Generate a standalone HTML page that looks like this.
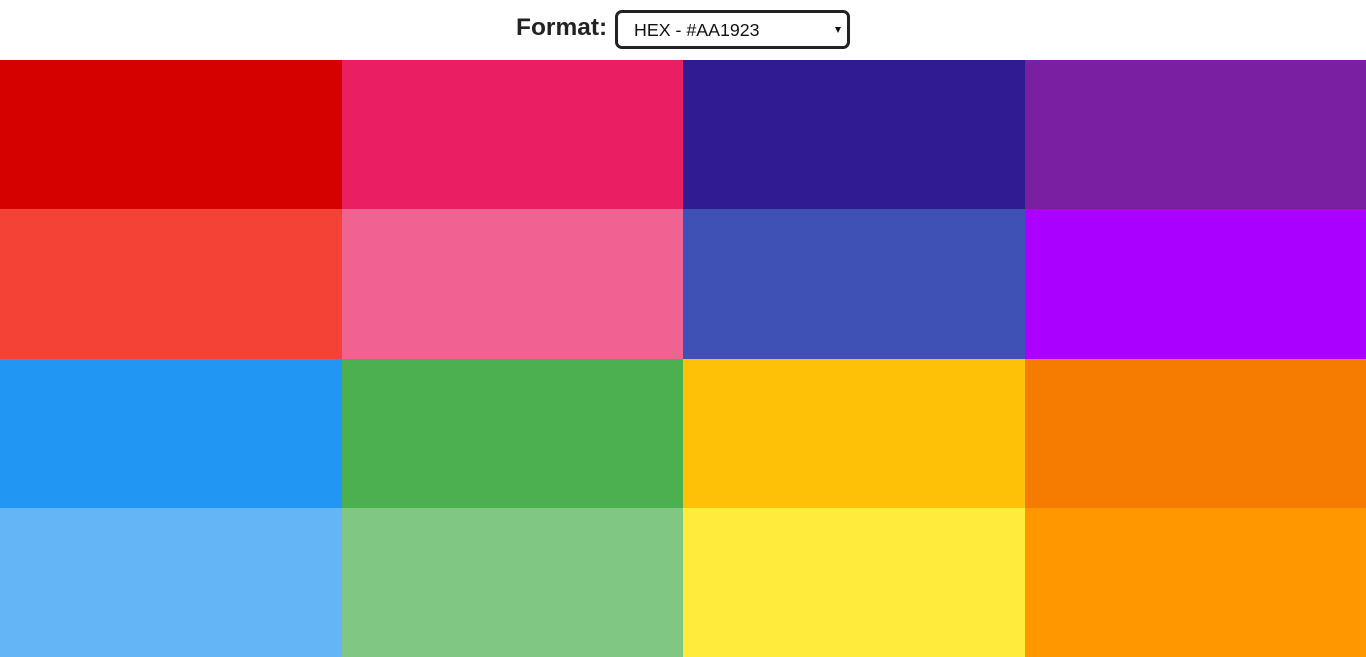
<!DOCTYPE html>
<html><head><style>
body{margin:0;width:1366px;height:657px;overflow:hidden;background:#fff;font-family:"Liberation Sans",sans-serif}
.hdr{position:absolute;left:0;top:0;width:1366px;height:60px}
.lbl{position:absolute;left:516px;top:14px;font-size:24.5px;font-weight:bold;color:#222}
.sel{position:absolute;left:615px;top:10px;border:3px solid #222;border-radius:7px;width:229px;height:33px}
.sel span{position:absolute;left:16px;top:7px;font-size:17.8px;color:#111}
.sel i{position:absolute;right:6px;top:14px;width:0;height:0;border-left:3px solid transparent;border-right:3px solid transparent;border-top:6px solid #111}
.c{position:absolute}
</style></head><body>
<div class="hdr"><div class="lbl">Format:</div><div class="sel"><span>HEX - #AA1923</span><i></i></div></div>
<div class="c" style="left:0;top:60px;width:342px;height:149px;background:#d50000"></div>
<div class="c" style="left:342px;top:60px;width:341px;height:149px;background:#e91e63"></div>
<div class="c" style="left:683px;top:60px;width:342px;height:149px;background:#311b92"></div>
<div class="c" style="left:1025px;top:60px;width:341px;height:149px;background:#7b1fa2"></div>
<div class="c" style="left:0;top:209px;width:342px;height:150px;background:#f44336"></div>
<div class="c" style="left:342px;top:209px;width:341px;height:150px;background:#f06292"></div>
<div class="c" style="left:683px;top:209px;width:342px;height:150px;background:#3f51b5"></div>
<div class="c" style="left:1025px;top:209px;width:341px;height:150px;background:#aa00ff"></div>
<div class="c" style="left:0;top:359px;width:342px;height:149px;background:#2196f3"></div>
<div class="c" style="left:342px;top:359px;width:341px;height:149px;background:#4caf50"></div>
<div class="c" style="left:683px;top:359px;width:342px;height:149px;background:#ffc107"></div>
<div class="c" style="left:1025px;top:359px;width:341px;height:149px;background:#f57c00"></div>
<div class="c" style="left:0;top:508px;width:342px;height:149px;background:#64b5f6"></div>
<div class="c" style="left:342px;top:508px;width:341px;height:149px;background:#81c784"></div>
<div class="c" style="left:683px;top:508px;width:342px;height:149px;background:#ffeb3b"></div>
<div class="c" style="left:1025px;top:508px;width:341px;height:149px;background:#ff9800"></div>
</body></html>
